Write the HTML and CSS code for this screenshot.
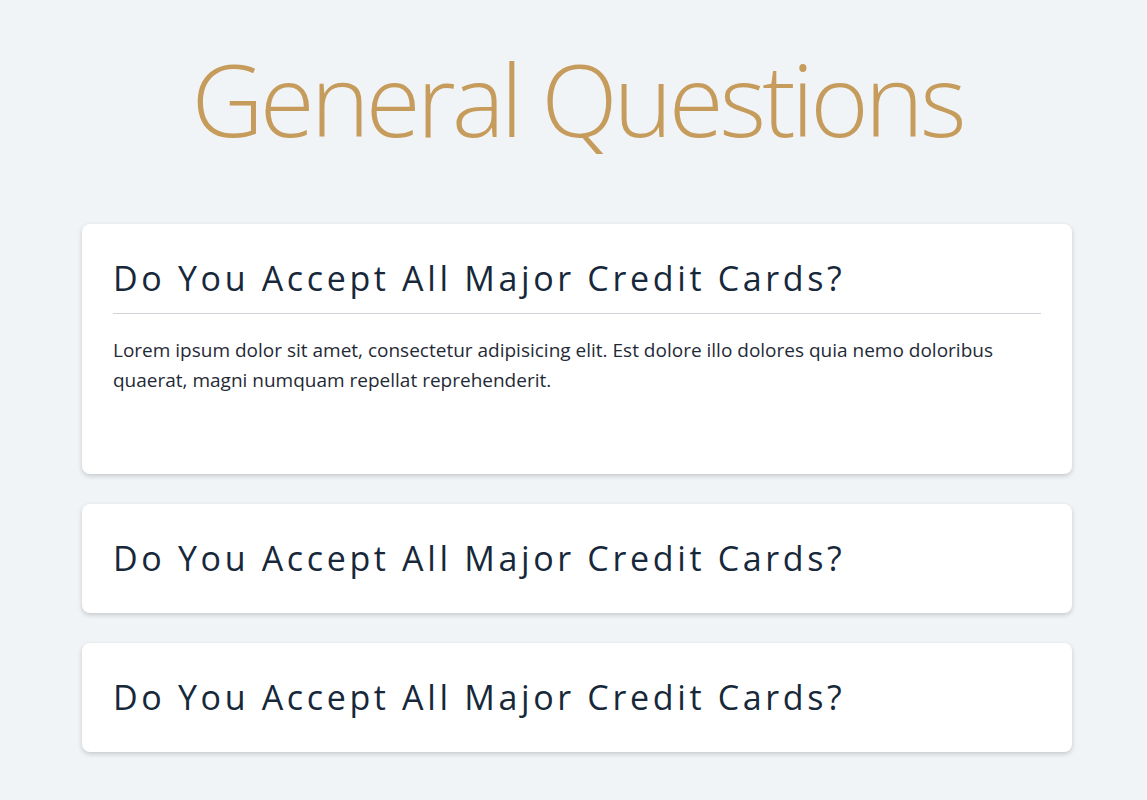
FILE: index.html
```html
<!DOCTYPE html>
<html lang="en">
<head>
<meta charset="utf-8">
<title>General Questions</title>
<link rel="stylesheet" href="styles.css">
</head>
<body>
<main class="faq">
  <h1 class="faq-title">General Questions</h1>
  <section class="card">
    <h2 class="card-q">Do You Accept All Major Credit Cards?</h2>
    <div class="card-a">
      <p>Lorem ipsum dolor sit amet, consectetur adipisicing elit. Est dolore illo dolores quia nemo doloribus quaerat, magni numquam repellat reprehenderit.</p>
    </div>
  </section>
  <section class="card">
    <h2 class="card-q">Do You Accept All Major Credit Cards?</h2>
  </section>
  <section class="card">
    <h2 class="card-q">Do You Accept All Major Credit Cards?</h2>
  </section>
</main>
</body>
</html>
```
FILE: styles.css
```css
* { box-sizing: border-box; }
html, body { margin: 0; padding: 0; }
body {
  background: #f1f4f7;
  font-family: "Open Sans", "Noto Sans", sans-serif;
  color: #1b2b3b;
}
.faq {
  width: 990px;
  margin-left: 82px;
  display: flex;
  flex-direction: column;
  gap: 30px;
  padding-bottom: 48px;
}
.faq-title {
  margin: 0;
  padding-top: 28px;
  height: 194px;
  text-align: center;
  font-weight: 300;
  font-size: 100px;
  line-height: 140px;
  color: #c69c5d;
  letter-spacing: -4px;
}
.card {
  background: #fff;
  border-radius: 8px;
  box-shadow: 0 2px 5px rgba(0,0,0,0.18);
  padding: 30px 31px 31px;
}
.card-q {
  margin: 0;
  font-weight: 400;
  font-size: 34px;
  line-height: 48px;
  letter-spacing: 3.65px;
  color: #16283a;
}
.card-a {
  margin-top: 11px;
  border-top: 1px solid #cfd2d6;
  padding-top: 21px;
  padding-bottom: 48px;
}
.card-a p {
  margin: 0;
  font-size: 19px;
  line-height: 30px;
  color: #1f2a36;
}
```
